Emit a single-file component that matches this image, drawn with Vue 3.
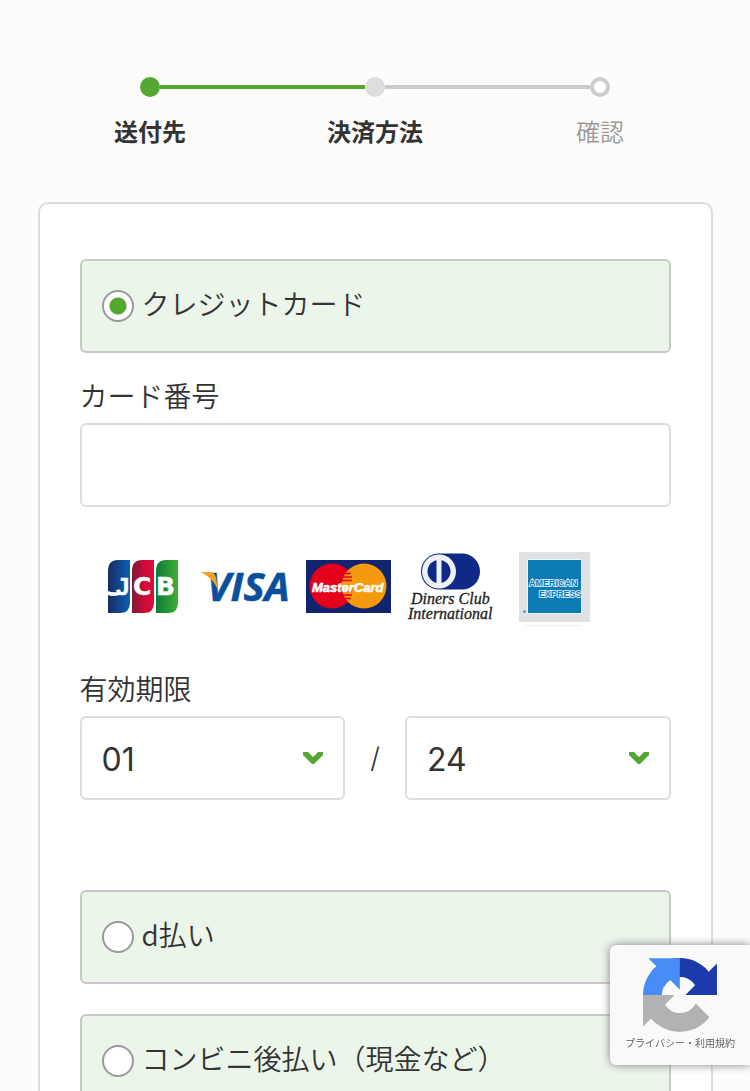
<script setup>
import { ref } from 'vue'

const method = ref('card')
const cardNumber = ref('')
const month = ref('01')
const year = ref('24')
const months = Array.from({ length: 12 }, (_, i) => String(i + 1).padStart(2, '0'))
const years = Array.from({ length: 10 }, (_, i) => String(24 + i))
const steps = [
  { label: '送付先', state: 'done' },
  { label: '決済方法', state: 'current' },
  { label: '確認', state: 'todo' }
]
const otherMethods = [
  { value: 'dpay', label: 'd払い' },
  { value: 'cvs', label: 'コンビニ後払い（現金など）' }
]
</script>

<template>
  <div class="page">
    <ol class="steps">
      <li v-for="s in steps" :key="s.label" class="step" :class="s.state">
        <div class="track">
          <span class="line"></span>
          <span class="dot"></span>
          <span class="line"></span>
        </div>
        <span class="step-label">{{ s.label }}</span>
      </li>
    </ol>

    <form class="card">
      <label class="option">
        <input v-model="method" class="radio" type="radio" name="method" value="card" />
        <span class="option-text">クレジットカード</span>
      </label>

      <div class="field">
        <label class="field-label" for="card-number">カード番号</label>
        <input id="card-number" v-model="cardNumber" class="box" type="text" inputmode="numeric" />
      </div>

      <div class="brands">
        <svg viewBox="0 0 103 85" role="img" aria-label="JCB">
          <defs>
            <linearGradient id="jb"><stop offset="0" stop-color="#1b2a63" /><stop offset="1" stop-color="#0a62b4" /></linearGradient>
            <linearGradient id="jr"><stop offset="0" stop-color="#7c1a3c" /><stop offset="0.6" stop-color="#d00a35" /><stop offset="1" stop-color="#d90f3a" /></linearGradient>
            <linearGradient id="jg"><stop offset="0" stop-color="#0b7a35" /><stop offset="1" stop-color="#3fb035" /></linearGradient>
          </defs>
          <path d="M16 26Q16 15 26 15H38V58Q38 68 28 68H16Z" fill="url(#jb)" />
          <path d="M40 26Q40 15 50 15H62V58Q62 68 52 68H40Z" fill="url(#jr)" />
          <path d="M64 26Q64 15 74 15H86V58Q86 68 76 68H64Z" fill="url(#jg)" />
          <path d="M16 46Q20 48 28 47V50Q20 52 16 50Z" fill="#fff" />
          <g fill="#fff" stroke="#fff" stroke-width="0.4" font-weight="700">
            <text x="24" y="50" font-family="Liberation Sans, sans-serif" font-size="24">J</text>
            <text x="41" y="50" font-family="DejaVu Sans, sans-serif" font-size="25">C</text>
            <text x="64" y="50" font-family="DejaVu Sans, sans-serif" font-size="25">B</text>
          </g>
        </svg>
        <svg viewBox="0 0 103 85" role="img" aria-label="VISA">
          <text x="12" y="56" fill="#0a4f9b" stroke="#0a4f9b" stroke-width="0.6" font-family="Open Sans, sans-serif" font-weight="700" font-style="italic" font-size="40">VISA</text>
          <path d="M6 27H16Q20 28 21 33L23 45Q18 33 6 27Z" fill="#f5a11c" />
        </svg>
        <svg viewBox="0 0 103 85" role="img" aria-label="MasterCard">
          <rect x="8" y="15" width="85" height="53" fill="#10246f" />
          <circle cx="34" cy="41" r="22.5" fill="#e4001b" />
          <circle cx="66" cy="41" r="22.5" fill="#f59a0c" />
          <path d="M45 28.500h8M44 32h10M43 35.500h11M43 46.500h11M44 50h10M45 53.500h8" stroke="#e4001b" stroke-width="1.600" />
          <text x="14" y="47" fill="#fff" stroke="#fff" stroke-width="0.6" font-family="Liberation Sans, sans-serif" font-weight="700" font-style="italic" font-size="13">MasterCard</text>
        </svg>
        <svg viewBox="0 0 103 85" role="img" aria-label="Diners Club International">
          <rect x="20" y="8.500" width="59" height="36" rx="18" fill="#0f2a86" />
          <circle cx="38" cy="26.500" r="17" fill="#eef0f4" />
          <circle cx="38" cy="26.500" r="11.500" fill="#0f2a86" />
          <path d="M38 14V39" stroke="#eef0f4" stroke-width="5" />
          <g fill="#222" stroke="#222" stroke-width="0.3" font-family="Liberation Serif, serif" font-style="italic" font-size="16">
            <text x="10" y="59">Diners Club</text>
            <text x="7" y="74">International</text>
          </g>
        </svg>
        <svg viewBox="0 0 103 85" role="img" aria-label="American Express">
          <rect x="15" y="7" width="71" height="70" fill="#dfe1e3" />
          <rect x="23" y="14" width="55" height="55" fill="#f2f5f7" />
          <rect x="24" y="15" width="53" height="53" fill="#0c7ab5" />
          <path d="M22 80.500H76" stroke="#ececec" />
          <circle cx="20.500" cy="66.500" r="1.500" fill="#5aa3cc" />
          <g fill="#0c7ab5" stroke="#e6f3fa" stroke-width="1.600" paint-order="stroke" font-family="Liberation Sans, sans-serif" font-weight="700" font-size="9">
            <text x="25" y="41">AMERICAN</text>
            <text x="35" y="52">EXPRESS</text>
          </g>
        </svg>
      </div>

      <div class="field">
        <label class="field-label" for="exp-month">有効期限</label>
        <div class="expiry">
          <div class="select">
            <select id="exp-month" v-model="month" class="box">
              <option v-for="m in months" :key="m">{{ m }}</option>
            </select>
            <svg class="chevron" viewBox="0 0 20 12" aria-hidden="true"><path d="M0 0H5L10 5L15 0H20V3L11 12H9L0 3Z" /></svg>
          </div>
          <span class="slash">/</span>
          <div class="select">
            <select v-model="year" class="box" aria-label="有効期限（年）">
              <option v-for="y in years" :key="y">{{ y }}</option>
            </select>
            <svg class="chevron" viewBox="0 0 20 12" aria-hidden="true"><path d="M0 0H5L10 5L15 0H20V3L11 12H9L0 3Z" /></svg>
          </div>
        </div>
      </div>

      <div class="others">
        <label v-for="o in otherMethods" :key="o.value" class="option">
          <input v-model="method" class="radio" type="radio" name="method" :value="o.value" />
          <span class="option-text">{{ o.label }}</span>
        </label>
      </div>
    </form>

    <aside class="badge">
      <svg class="badge-logo" viewBox="0 0 64 64" aria-hidden="true">
        <path fill="#1c3aa9" d="M64 31.955l-.033-1.37V4.687l-7.16 7.16C50.948 4.674 42.033.093 32.05.093c-10.4 0-19.622 4.96-25.458 12.64l11.736 11.86a15.55 15.55 0 0 1 4.754-5.334c2.05-1.6 4.952-2.906 8.968-2.906.485 0 .86.057 1.135.163 4.976.393 9.288 3.14 11.828 7.124l-8.307 8.307L64 31.953" />
        <path fill="#4a8cf5" d="M31.862.094l-1.37.033H4.594l7.16 7.16C4.58 13.147 0 22.06 0 32.046c0 10.4 4.96 19.622 12.64 25.458L24.5 45.768a15.55 15.55 0 0 1-5.334-4.754c-1.6-2.05-2.906-4.952-2.906-8.968 0-.485.057-.86.163-1.135.393-4.976 3.14-9.288 7.124-11.828l8.307 8.307L31.86.095" />
        <path fill="#b2b2b2" d="M.001 32.045l.033 1.37v25.898l7.16-7.16c5.86 7.173 14.774 11.754 24.76 11.754 10.4 0 19.622-4.96 25.458-12.64l-11.736-11.86a15.55 15.55 0 0 1-4.754 5.334c-2.05 1.6-4.952 2.906-8.968 2.906-.485 0-.86-.057-1.135-.163-4.976-.393-9.288-3.14-11.828-7.124l8.307-8.307c-10.522.04-22.4.066-27.295-.005" />
      </svg>
      <div class="badge-links"><a href="#privacy">プライバシー</a>・<a href="#terms">利用規約</a></div>
    </aside>
  </div>
</template>

<style>
body {
  background: #fefcfa;
}
</style>

<style scoped>
.page {
  box-sizing: border-box;
  padding: 77px 5% 40px;
  color: #333;
  font-family: "Noto Sans CJK JP", sans-serif;
  font-weight: 350;
}
.steps {
  display: grid;
  grid-template-columns: repeat(3, 1fr);
  margin: 0 0 53px;
  padding: 0;
  list-style: none;
}
.track {
  display: flex;
  align-items: center;
}
.line {
  flex: 1;
  height: 4px;
  background: #ccc;
}
.step:first-child .line:first-child,
.step:last-child .line:last-child {
  background: transparent;
}
.done .line,
.current .line:first-child {
  background: #54a733;
}
.dot {
  box-sizing: border-box;
  width: 20px;
  height: 20px;
  border-radius: 50%;
}
.done .dot {
  background: #54a733;
}
.current .dot {
  background: #ddd;
}
.todo .dot {
  border: 4px solid #ccc;
  background: #fff;
}
.step-label {
  display: block;
  margin-top: 16px;
  font-size: 24px;
  line-height: 36px;
  font-weight: 700;
  text-align: center;
}
.todo .step-label {
  color: #999;
  font-weight: 350;
}
.card {
  box-sizing: border-box;
  padding: 55px 40px;
  border: 2px solid #ddd;
  border-radius: 10px;
  background: #fff;
}
.option {
  display: flex;
  align-items: center;
  gap: 8px;
  box-sizing: border-box;
  min-height: 94px;
  padding: 20px;
  border: 2px solid #c8c8c8;
  border-radius: 6px;
  background: #ebf5ea;
}
.option-text {
  padding-bottom: 6px;
  font-size: 28px;
  line-height: 40px;
}
.radio {
  appearance: none;
  flex: none;
  box-sizing: border-box;
  width: 32px;
  height: 32px;
  margin: 0;
  border: 2px solid #999;
  border-radius: 50%;
  background: #fff;
}
.radio:checked {
  background: radial-gradient(circle, #54a733 8px, #fff 9px);
}
.field {
  margin-top: 22px;
}
.field-label {
  display: block;
  margin-bottom: 8px;
  font-size: 28px;
  line-height: 40px;
}
.box {
  appearance: none;
  box-sizing: border-box;
  display: block;
  width: 100%;
  height: 84px;
  margin: 0;
  padding: 2px 20px 0;
  border: 2px solid #ddd;
  border-radius: 6px;
  background: #fff;
  color: #333;
  font-family: Inter, "Noto Sans CJK JP", sans-serif;
  font-size: 32px;
  font-weight: 400;
}
.brands {
  display: flex;
  margin: 38px 0;
  padding-left: 12px;
}
.brands svg {
  flex: 1;
  min-width: 0;
  max-width: 103px;
}
.expiry {
  display: grid;
  grid-template-columns: 1fr 60px 1fr;
  align-items: center;
}
.select {
  display: grid;
  align-items: center;
}
.select > * {
  grid-area: 1 / 1;
}
.chevron {
  justify-self: end;
  width: 20px;
  height: 12px;
  margin-right: 22px;
  fill: #54a733;
  pointer-events: none;
}
.slash {
  font-family: Inter, sans-serif;
  font-size: 28px;
  text-align: center;
}
.others {
  display: grid;
  gap: 30px;
  margin-top: 90px;
}
.badge {
  position: fixed;
  right: 0;
  bottom: 26px;
  box-sizing: border-box;
  width: 140px;
  height: 120px;
  padding-top: 13px;
  border-radius: 6px 0 0 6px;
  background: #f9f9f9;
  box-shadow: 0 0 10px #808080;
  text-align: center;
}
.badge-logo {
  display: block;
  width: 74px;
  height: 74px;
  margin: 0 auto;
}
.badge-links {
  margin-top: 3px;
  color: #555;
  font-size: 10px;
  line-height: 16px;
  white-space: nowrap;
}
.badge-links a {
  color: inherit;
  text-decoration: none;
}
</style>
